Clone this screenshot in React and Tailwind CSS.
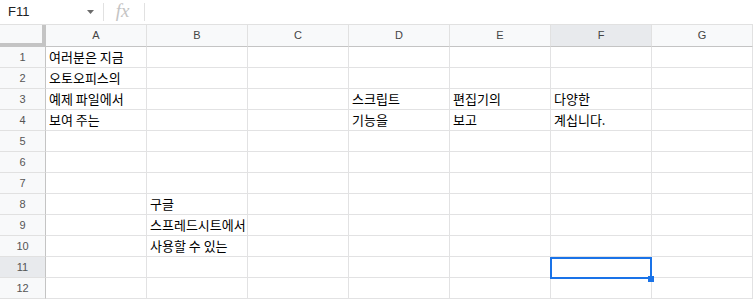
import React from "react";

const cols = ["A", "B", "C", "D", "E", "F", "G"];

const data = {
  "1": { A: "여러분은 지금" },
  "2": { A: "오토오피스의" },
  "3": { A: "예제 파일에서", D: "스크립트", E: "편집기의", F: "다양한" },
  "4": { A: "보여 주는", D: "기능을", E: "보고", F: "계십니다." },
  "8": { B: "구글" },
  "9": { B: "스프레드시트에서" },
  "10": { B: "사용할 수 있는" },
};

const selCol = "F";
const selRow = 11;

function FormulaBar() {
  return (
    <div className="flex h-[25px] items-center border-b border-[#e1e1e1] bg-white">
      <div className="flex w-[103px] items-center justify-between pl-[8px] pr-[9px] text-[13px] text-[#202124] font-['Liberation_Sans',Arial,sans-serif]">
        <span>F11</span>
        <svg width="7" height="4" viewBox="0 0 7 4">
          <path d="M0 0 L7 0 L3.5 4 Z" fill="#6b6b6b" />
        </svg>
      </div>
      <div className="h-[18px] w-px bg-[#e1e1e1]" />
      <div className="flex w-[40px] items-center justify-center pb-[2px] pr-[3px] text-[19px] italic text-[#c4c4c4] font-['Liberation_Serif','Times_New_Roman',serif]">
        fx
      </div>
      <div className="h-[18px] w-px bg-[#e1e1e1]" />
    </div>
  );
}

export default function App() {
  const rows = Array.from({ length: 12 }, (_, i) => i + 1);

  return (
    <div className="h-[301px] w-[753px] overflow-hidden bg-white font-['Noto_Sans_CJK_KR','Noto_Sans',sans-serif]">
      <FormulaBar />
      <div className="grid grid-cols-[46px_repeat(7,101px)]">
        <div className="h-[22px] border-b-4 border-r-4 border-[#c4c4c4] bg-[#f8f9fa]" />
        {cols.map((c) => (
          <div
            key={c}
            className={`flex h-[22px] items-center justify-center border-b border-r border-b-[#c4c4c4] border-r-[#e1e1e1] text-[11px] text-[#444] font-['Liberation_Sans',Arial,sans-serif] ${c === selCol ? "bg-[#e8eaed]" : "bg-[#f8f9fa]"}`}
          >
            {c}
          </div>
        ))}

        {rows.map((r) => (
          <React.Fragment key={r}>
            <div
              className={`flex h-[21px] items-center justify-center border-b border-r border-b-[#e1e1e1] border-r-[#c4c4c4] text-[11px] text-[#555] font-['Liberation_Sans',Arial,sans-serif] ${r === selRow ? "bg-[#e8eaed]" : "bg-[#f8f9fa]"}`}
            >
              {r}
            </div>
            {cols.map((c) => {
              const text = data[r] && data[r][c];
              const selected = r === selRow && c === selCol;
              return (
                <div
                  key={c}
                  className={`relative flex h-[21px] items-center overflow-visible whitespace-nowrap border-b border-r border-[#e2e2e3] pl-[3px] text-[13px] text-black ${selected ? "z-10" : ""}`}
                >
                  {text}
                  {selected && (
                    <>
                      <div className="pointer-events-none absolute -left-px top-0 h-[22px] w-[102px] border-2 border-[#1a73e8]" />
                      <div className="absolute -bottom-[5px] -right-[3px] h-[6px] w-[6px] bg-[#1a73e8]" />
                    </>
                  )}
                </div>
              );
            })}
          </React.Fragment>
        ))}
      </div>
    </div>
  );
}
